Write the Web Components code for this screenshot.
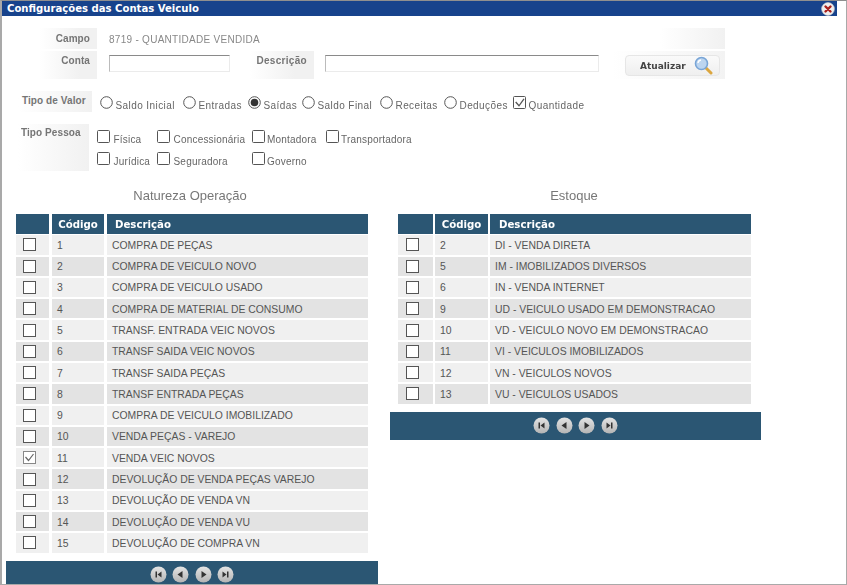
<!DOCTYPE html>
<html lang="pt"><head><meta charset="utf-8"><title>Configurações das Contas Veiculo</title>
<style>
html,body{margin:0;padding:0;height:585px;overflow:hidden;background:#fff;font-family:"Liberation Sans",Arial,sans-serif}
</style></head><body>
<cv-dialog heading="Configurações das Contas Veiculo">
  <cv-form></cv-form>
  <cv-lists>
    <cv-list slot="a" heading="Natureza Operação" cols="33px 52px 261px" gaps="3px" src="nat" checked="11" style="--ml:10px;--hp:8px;--bp:7px;--pt:8px;--pw:372px;--pr:0px"></cv-list>
    <cv-list slot="b" heading="Estoque" cols="35px 53px 261px" gaps="2px" src="est" style="--ml:8px;--hp:9px;--bp:8px;--pt:8.7px;--pw:371px;--pr:0px"></cv-list>
  </cv-lists>
</cv-dialog>
<script>
const DATA={
 nat:[[1,"COMPRA DE PEÇAS"],[2,"COMPRA DE VEICULO NOVO"],[3,"COMPRA DE VEICULO USADO"],[4,"COMPRA DE MATERIAL DE CONSUMO"],[5,"TRANSF. ENTRADA VEIC NOVOS"],[6,"TRANSF SAIDA VEIC NOVOS"],[7,"TRANSF SAIDA PEÇAS"],[8,"TRANSF ENTRADA PEÇAS"],[9,"COMPRA DE VEICULO IMOBILIZADO"],[10,"VENDA PEÇAS - VAREJO"],[11,"VENDA VEIC NOVOS"],[12,"DEVOLUÇÃO DE VENDA PEÇAS VAREJO"],[13,"DEVOLUÇÃO DE VENDA VN"],[14,"DEVOLUÇÃO DE VENDA VU"],[15,"DEVOLUÇÃO DE COMPRA VN"]],
 est:[[2,"DI - VENDA DIRETA"],[5,"IM - IMOBILIZADOS DIVERSOS"],[6,"IN - VENDA INTERNET"],[9,"UD - VEICULO USADO EM DEMONSTRACAO"],[10,"VD - VEICULO NOVO EM DEMONSTRACAO"],[11,"VI - VEICULOS IMOBILIZADOS"],[12,"VN - VEICULOS NOVOS"],[13,"VU - VEICULOS USADOS"]]
};
class Base extends HTMLElement{
  render(html){ if(!this.shadowRoot) this.attachShadow({mode:'open'}); this.shadowRoot.innerHTML=html; }
}
customElements.define('cv-dialog',class extends Base{connectedCallback(){this.render(`<style>
:host{display:block;box-sizing:border-box;width:847px;height:585px;border-top:1px solid #8f8f8f;border-left:2px solid #a9a9a9;border-right:1px solid #a9a9a9;border-bottom:1px solid #a9a9a9;overflow:hidden;filter:blur(.35px)}
.bar{height:15px;width:835px;background:#17438c;display:flex;align-items:center;justify-content:space-between;box-sizing:border-box;padding:0 2px 0 5px;color:#fff;font:bold 10.1px "DejaVu Sans",sans-serif}
svg{display:block}
</style><div class="bar"><span>${this.getAttribute('heading')}</span>
<svg width="14" height="14" viewBox="0 0 14 14"><circle cx="7" cy="7" r="6.4" fill="#eee" stroke="#ccc" stroke-width=".6"/><path d="M4.5 4.5l5 5M9.5 4.5l-5 5" stroke="#a8201c" stroke-width="2.4" stroke-linecap="round"/></svg></div><slot></slot>`)}});

customElements.define('cv-cell',class extends Base{connectedCallback(){this.render(`<style>
:host{display:flex;box-sizing:border-box;justify-content:flex-end;font:bold 10px "Liberation Sans",sans-serif;letter-spacing:var(--cl,.08px);color:#757575;background:linear-gradient(90deg,#fff 0,#f1f1f1 70%,#f1f1f1 100%);padding:var(--cp,4px) 7px 0 0;white-space:nowrap}
</style><slot></slot>`)}});

customElements.define('cv-option',class extends Base{connectedCallback(){const r=this.getAttribute('type')==='radio',c=this.hasAttribute('checked');
const ico=r?`<svg width="13" height="13" viewBox="0 0 13 13"><circle cx="6.5" cy="6.5" r="5.8" fill="#fff" stroke="#555" stroke-width="1"/>${c?'<circle cx="6.5" cy="6.5" r="3.8" fill="#333"/>':''}</svg>`
:`<svg width="13" height="13" viewBox="0 0 13 13"><rect x=".5" y=".5" width="12" height="12" rx="1" fill="#fff" stroke="#555"/>${c?'<path d="M2.7 6l3.3 3.8L11 2.8" fill="none" stroke="#555" stroke-width="1.3"/>':''}</svg>`;
this.render(`<style>
:host{display:flex;align-items:flex-start;font:10px "Liberation Sans",sans-serif;letter-spacing:var(--ls,.42px);color:#666;white-space:nowrap}
svg{display:block;flex:none}
span{margin:var(--dy,3px) 0 0 var(--gap,3px)}
</style>${ico}<span><slot></slot></span>`)}});

customElements.define('cv-form',class extends Base{connectedCallback(){this.render(`<style>
:host{display:block;padding:12px 0 0 0;height:158px;box-sizing:border-box}
.r1,.r2{display:flex;margin-left:38px;width:685px}
.r1{height:21px;margin-bottom:2px;--cp:5px}
.r2{height:28px}
.lab{width:57px;flex:none}
.val{margin-left:12px;font:10px "Liberation Sans",sans-serif;color:#888;letter-spacing:.28px;padding-top:6px}
.fill{margin-left:auto;width:65px;background:linear-gradient(90deg,#fff,#f1f1f1)}
.inp{box-sizing:border-box;height:17px;margin-top:4px;margin-left:12px;background:#fff;border:1px solid #ebebeb;border-top:1px solid #8a8a8a;border-left:1px solid #bbb;flex:none}
.d{width:64px;margin-left:20px;--cl:.3px}
.btnc{width:113px;margin-left:13px;flex:none;background:linear-gradient(90deg,#fff,#f3f3f3);display:flex;box-sizing:border-box;padding:4px 0 0 13px}
.btn{box-sizing:border-box;width:95px;height:21px;border:1px solid #e6e6e6;border-radius:4px;background:linear-gradient(#fafafa,#efefef);display:flex;align-items:center;font:bold 9px "DejaVu Sans",sans-serif;color:#444;padding-left:14px;gap:8px}
.tv{display:flex;margin:12px 0 0 16px;height:21px}
.tv cv-cell{width:74px;justify-content:flex-start;padding:4px 0 0 4px;background:linear-gradient(90deg,#fff,#f1f1f1)}
.opts{display:grid;grid-template-columns:83px 65px 54px 78px 64px 69px auto;margin:5px 0 0 8px;--dy:3.5px;--gap:2.5px}
.tp{display:flex;margin:12px 0 0 16px;height:47px}
.tp cv-cell{width:71px;justify-content:flex-start;padding:3px 0 0 3px;background:linear-gradient(90deg,#fff,#f1f1f1)}
.chk{display:grid;grid-template-columns:60px 95px 74px auto;grid-auto-rows:22px;margin:6px 0 0 8px;--dy:4px;--gap:3.5px;--ls:.2px}
.chk .n{--gap:2px}
</style>
<div class="r1"><cv-cell class="lab">Campo</cv-cell><div class="val">8719 - QUANTIDADE VENDIDA</div><div class="fill"></div></div>
<div class="r2"><cv-cell class="lab">Conta</cv-cell><div class="inp" style="width:121px"></div><cv-cell class="d">Descrição</cv-cell><div class="inp" style="width:274px;margin-left:11px"></div>
<div class="btnc"><div class="btn"><span>Atualizar</span><svg width="19" height="19" viewBox="0 0 19 19"><path d="M11.5 11.5l5.5 5.5" stroke="#dba63f" stroke-width="3" stroke-linecap="round"/><circle cx="7.5" cy="7.5" r="6" fill="#bcd5f0" stroke="#79a5d6" stroke-width="1.6"/><path d="M4 7a3.5 3.5 0 0 1 3-3" fill="none" stroke="#fff" stroke-width="1.4"/></svg></div></div></div>
<div class="tv"><cv-cell>Tipo de Valor</cv-cell><div class="opts">
<cv-option type="radio">Saldo Inicial</cv-option><cv-option type="radio">Entradas</cv-option><cv-option type="radio" checked>Saídas</cv-option><cv-option type="radio">Saldo Final</cv-option><cv-option type="radio">Receitas</cv-option><cv-option type="radio">Deduções</cv-option><cv-option type="check" checked>Quantidade</cv-option></div></div>
<div class="tp"><cv-cell>Tipo Pessoa</cv-cell><div class="chk">
<cv-option type="check">Física</cv-option><cv-option type="check">Concessionária</cv-option><cv-option type="check" class="n">Montadora</cv-option><cv-option type="check" class="n">Transportadora</cv-option>
<cv-option type="check">Jurídica</cv-option><cv-option type="check">Seguradora</cv-option><cv-option type="check" class="n">Governo</cv-option></div></div>`)}});

customElements.define('cv-lists',class extends Base{connectedCallback(){this.render(`<style>
:host{display:flex;padding-left:4px;gap:12px;align-items:flex-start}
</style><slot name="a"></slot><slot name="b"></slot>`)}});

const BTN=p=>`<svg width="17" height="17" viewBox="0 0 17 17"><defs><linearGradient id="g" x1="0" y1="0" x2="0" y2="1"><stop offset="0" stop-color="#e4e4e4"/><stop offset="1" stop-color="#b4b4b4"/></linearGradient></defs><circle cx="8.5" cy="8.5" r="8" fill="url(#g)"/><path d="${p}" fill="#333"/></svg>`;
customElements.define('cv-pager',class extends Base{connectedCallback(){this.render(`<style>
:host{display:flex;box-sizing:border-box;width:var(--pw);height:28px;background:#2b5673;justify-content:center;align-items:center;gap:5.5px;padding:0 var(--pr) 1px 0}
svg{display:block}
</style>`+BTN('M5.5 5.5h1.5v6H5.5zM7.5 8.5l4-3v6z')+BTN('M5.5 8.5l5-3.5v7z')+BTN('M6.5 5l5 3.5-5 3.5z')+BTN('M5.5 5.5l4 3-4 3zM10 5.5h1.5v6H10z'))}});

customElements.define('cv-list',class extends Base{connectedCallback(){
const rows=DATA[this.getAttribute('src')],chk=this.getAttribute('checked');
const cols=this.getAttribute('cols'),gap=this.getAttribute('gaps');
const box=c=>`<svg width="13" height="13" viewBox="0 0 13 13"><rect x=".5" y=".5" width="12" height="12" fill="#fff" stroke="${c?'#888':'#555'}"/>${c?'<path d="M2.5 6l3 3.5L10.5 3" fill="none" stroke="#666" stroke-width="1.2"/>':''}</svg>`;
this.render(`<style>
:host{display:block;width:372px}
h2{margin:0;font:normal 13px "Liberation Sans",sans-serif;color:#777;text-align:center;padding:14px 0 10px;line-height:16px;width:368px}
.t{display:grid;grid-template-columns:${cols};column-gap:${gap};row-gap:2px;grid-auto-rows:19.29px;margin:0 0 0 var(--ml);width:max-content}
.h{background:#2b5673;color:#fff;font:bold 10.2px "DejaVu Sans",sans-serif;display:flex;align-items:center;height:20px;box-sizing:border-box;margin-bottom:1px}
.h.mid{justify-content:center}
.h.end{padding-left:var(--hp)}
.c{display:flex;align-items:center;font:10.4px "Liberation Sans",sans-serif;color:#555;padding:1px 0 0 5px;box-sizing:border-box;white-space:nowrap}
.c.b{padding:0 0 0 var(--bp)}
.c.b svg{display:block}
.o{background:#f0f0f0}.v{background:#e3e3e3}
cv-pager{margin-top:var(--pt)}
</style>
<h2>${this.getAttribute('heading')}</h2>
<div class="t"><div class="h"></div><div class="h mid">Código</div><div class="h end">Descrição</div>
${rows.map((r,i)=>{const z=i%2?'v':'o';return `<div class="c b ${z}">${box(String(r[0])===chk)}</div><div class="c ${z}">${r[0]}</div><div class="c ${z}">${r[1]}</div>`}).join('')}</div>
<cv-pager></cv-pager>`);
}});
</script>
</body></html>
